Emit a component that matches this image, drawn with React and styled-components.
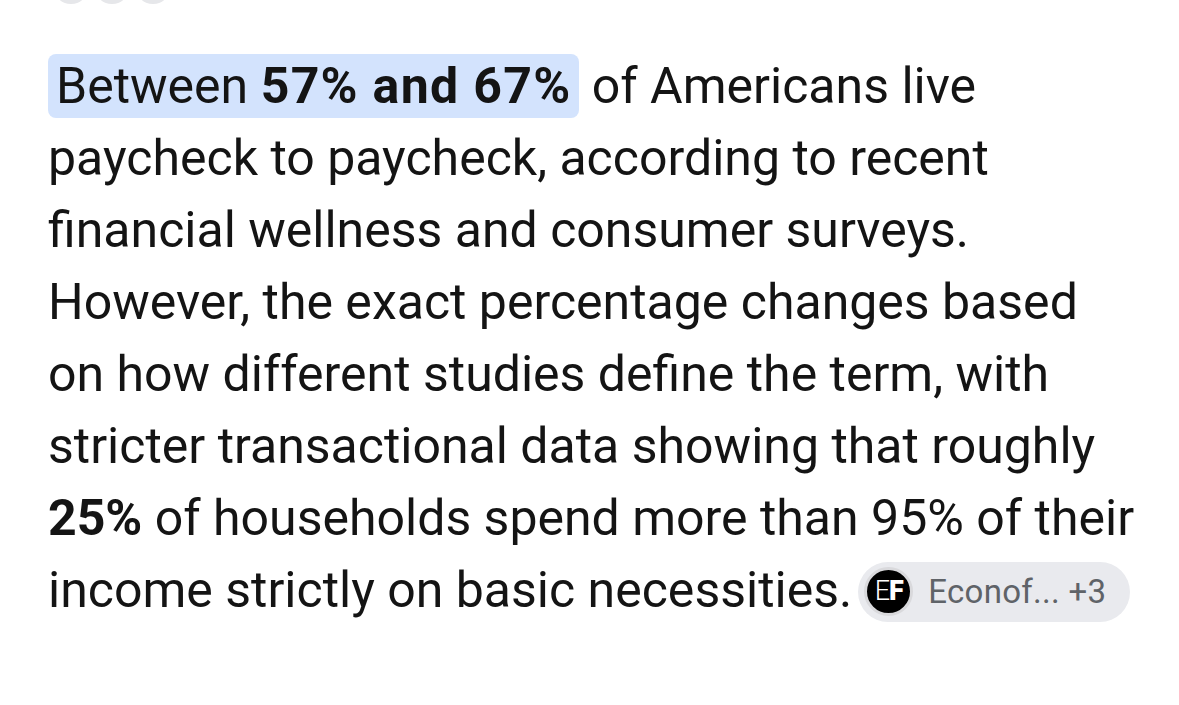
import React from "react";
import styled, { createGlobalStyle } from "styled-components";

const GlobalStyle = createGlobalStyle`
  body {
    margin: 0;
    background: #ffffff;
    font-family: Roboto, "Noto Sans", Arial, sans-serif;
  }
`;

const Page = styled.div`
  width: 1179px;
  height: 705px;
  overflow: hidden;
  background: #ffffff;
`;

const TopRow = styled.div`
  display: flex;
  gap: 5px;
  padding-left: 53px;
  margin-top: -32px;
`;

const Dot = styled.div`
  width: 36px;
  height: 36px;
  border-radius: 50%;
  background: #e6e7ea;
`;

const Answer = styled.p`
  margin: 46px 0 0;
  padding: 0 20px 0 48px;
  font-size: 50px;
  line-height: 72px;
  color: #141414;
  letter-spacing: 0;
  white-space: nowrap;
`;

const Highlight = styled.span`
  background: #d3e3fd;
  border-radius: 8px;
  padding: 3px 8px;
`;

const Strong = styled.b`
  font-weight: 700;
  letter-spacing: ${(p) => (p.$wide ? "1.3px" : "0")};
`;

const Chip = styled.span`
  display: inline-flex;
  align-items: center;
  gap: 15px;
  height: 60px;
  padding: 0 24px 0 6px;
  margin-left: 6px;
  border-radius: 30px;
  background: #e9eaee;
  vertical-align: middle;
  position: relative;
  top: -2px;
`;

const Logo = styled.span`
  display: flex;
  align-items: center;
  justify-content: center;
  width: 43px;
  height: 43px;
  border-radius: 50%;
  background: #000000;
  border: 3px solid #d9d9dc;
  color: #ffffff;
  font-size: 27px;
  line-height: 1;
  letter-spacing: -1px;
`;

const LogoThin = styled.span`
  font-weight: 300;
`;

const LogoBold = styled.span`
  font-weight: 900;
`;

const ChipText = styled.span`
  font-size: 33px;
  color: #5f6368;
  line-height: 1;
  letter-spacing: 0.3px;
`;

export default function App() {
  return (
    <>
      <GlobalStyle />
      <Page>
        <TopRow>
          <Dot />
          <Dot />
          <Dot />
        </TopRow>
        <Answer>
          <Highlight>
            Between <Strong $wide>57% and 67%</Strong>
          </Highlight>{" "}
          of Americans live
          <br />
          paycheck to paycheck, according to recent
          <br />
          financial wellness and consumer surveys.
          <br />
          However, the exact percentage changes based
          <br />
          on how different studies define the term, with
          <br />
          stricter transactional data showing that roughly
          <br />
          <Strong>25%</Strong> of households spend more than 95% of their
          <br />
          income strictly on basic necessities.
          <Chip>
            <Logo>
              <LogoThin>E</LogoThin>
              <LogoBold>F</LogoBold>
            </Logo>
            <ChipText>Econof... +3</ChipText>
          </Chip>
        </Answer>
      </Page>
    </>
  );
}
